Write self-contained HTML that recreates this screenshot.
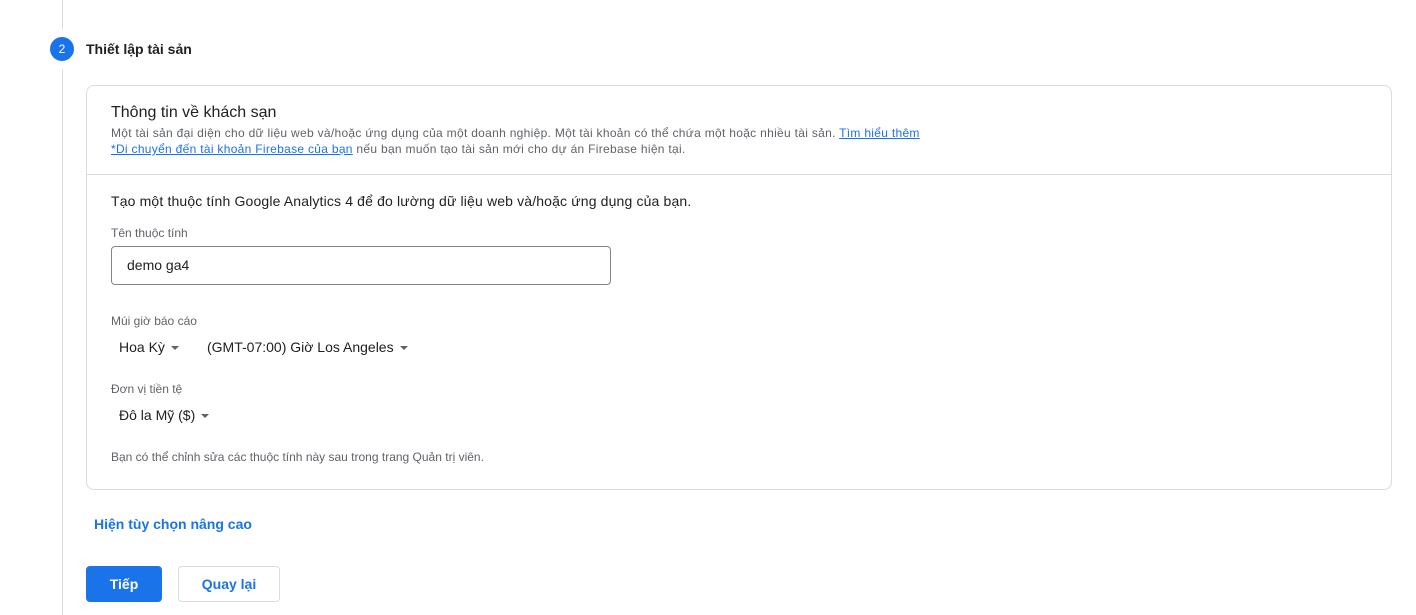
<!DOCTYPE html>
<html><head><meta charset="utf-8"><style>
*{margin:0;padding:0;box-sizing:border-box}
body{width:1416px;height:615px;background:#fff;font-family:"Liberation Sans",Roboto,sans-serif;color:#202124;position:relative;overflow:hidden}
.a{position:absolute;white-space:nowrap}
.line{position:absolute;left:62px;width:1px;background:#dadce0}
.circ{position:absolute;left:50px;top:37px;width:24px;height:24px;border-radius:50%;background:#1a73e8;color:#fff;font-size:12px;text-align:center;line-height:24px}
.card{position:absolute;left:86px;top:85px;width:1306px;height:405px;border:1px solid #dadce0;border-radius:8px}
.div{position:absolute;left:87px;top:174px;width:1304px;height:1px;background:#dadce0}
.s{font-size:12px;color:#5f6368;letter-spacing:0.3px}
a{color:#1a73e8;text-decoration:underline}
.lbl{font-size:12px;color:#5f6368}
.sel{font-size:14px;color:#202124}
.car{display:inline-block;width:0;height:0;border-left:4px solid transparent;border-right:4px solid transparent;border-top:4px solid #5f6368;vertical-align:middle;margin-left:6px}
.inp{position:absolute;left:111px;top:246px;width:500px;height:39px;border:1px solid #80868b;border-radius:4px;font-size:14px;padding:0 0 0 15px;line-height:37px}
.btn{position:absolute;height:36px;border-radius:4px;font-size:14px;font-weight:bold;text-align:center;line-height:36px}
</style></head><body>
<div class="line" style="top:0;height:29px"></div>
<div class="line" style="top:69px;height:546px"></div>
<div class="circ">2</div>
<div class="a" style="left:86px;top:41px;font-size:14px;font-weight:bold">Thiết lập tài sản</div>
<div class="card"></div>
<div class="div"></div>
<div class="a" style="left:111px;top:104px;font-size:16px;color:#202124">Thông tin về khách sạn</div>
<div class="a s" style="left:111px;top:126px">Một tài sản đại diện cho dữ liệu web và/hoặc ứng dụng của một doanh nghiệp. Một tài khoản có thể chứa một hoặc nhiều tài sản. <a>Tìm hiểu thêm</a></div>
<div class="a s" style="left:111px;top:142px"><a>*Di chuyển đến tài khoản Firebase của bạn</a> nếu bạn muốn tạo tài sản mới cho dự án Firebase hiện tại.</div>
<div class="a" style="left:111px;top:193px;font-size:14px;letter-spacing:0.15px">Tạo một thuộc tính Google Analytics 4 để đo lường dữ liệu web và/hoặc ứng dụng của bạn.</div>
<div class="a lbl" style="left:111px;top:226px">Tên thuộc tính</div>
<div class="inp">demo ga4</div>
<div class="a lbl" style="left:111px;top:314px">Múi giờ báo cáo</div>
<div class="a sel" style="left:119px;top:339px">Hoa Kỳ<span class="car"></span></div>
<div class="a sel" style="left:207px;top:339px">(GMT-07:00) Giờ Los Angeles<span class="car"></span></div>
<div class="a lbl" style="left:111px;top:382px">Đơn vị tiền tệ</div>
<div class="a sel" style="left:119px;top:407px">Đô la Mỹ ($)<span class="car"></span></div>
<div class="a lbl" style="left:111px;top:450px">Bạn có thể chỉnh sửa các thuộc tính này sau trong trang Quản trị viên.</div>
<div class="a" style="left:94px;top:516px;font-size:14px;color:#1a73e8;font-weight:bold">Hiện tùy chọn nâng cao</div>
<div class="btn" style="left:86px;top:566px;width:76px;background:#1a73e8;color:#fff">Tiếp</div>
<div class="btn" style="left:178px;top:566px;width:102px;border:1px solid #dadce0;color:#1a73e8;line-height:34px">Quay lại</div>
</body></html>
